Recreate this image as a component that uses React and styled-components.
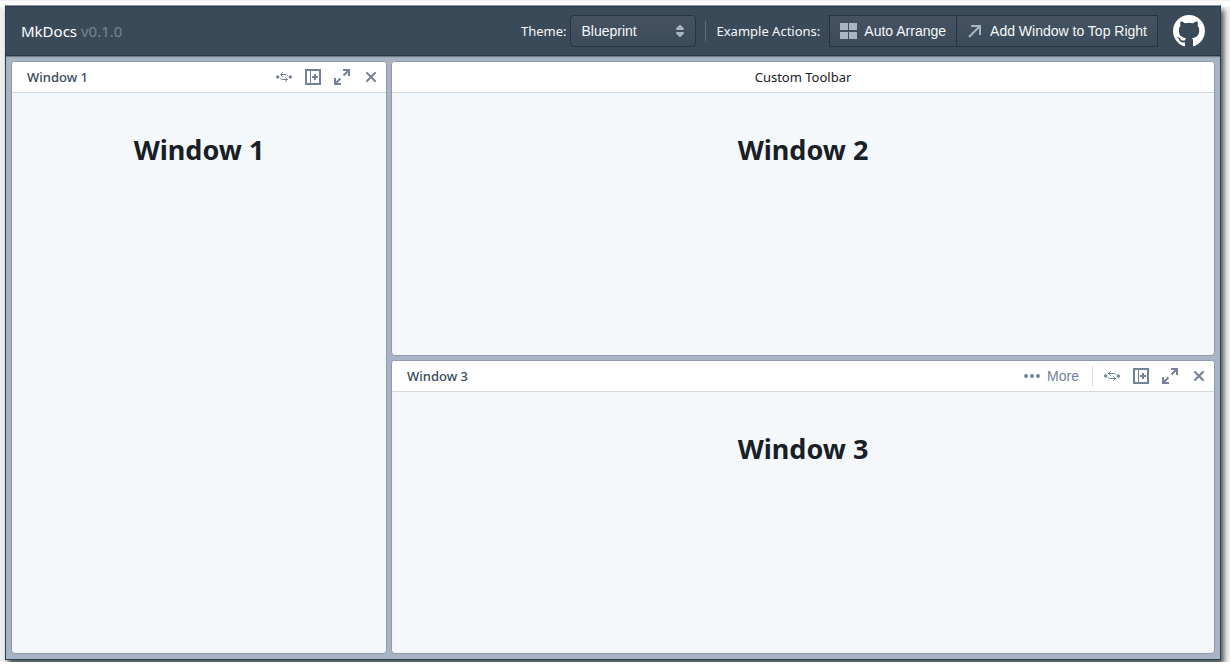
import React from "react";
import styled, { createGlobalStyle } from "styled-components";

const ui = '"Noto Sans", "Open Sans", sans-serif';
const control = '"Liberation Sans", Arial, sans-serif';

const GlobalStyle = createGlobalStyle`
  *, *::before, *::after { box-sizing: border-box; }
  body { margin: 0; background: #fff; font-family: ${ui}; font-size: 13px; color: #182026; }
`;

const Page = styled.div`
  display: flex;
  height: calc(100vh - 7px);
  min-height: 400px;
  padding: 4px 9px 2px 5px;
  overflow: hidden;
  border-top: 1px solid #f0f0f0;
  background: linear-gradient(#fff 6px, #f0f0f0 6px);
`;

const Frame = styled.div`
  flex: 1;
  min-width: 0;
  display: flex;
  flex-direction: column;
  border: 1px solid #1f444b;
  border-top-color: #8d979c;
  box-shadow: 3px 5px 5px #555;
`;

const Navbar = styled.header`
  flex: none;
  height: 50px;
  display: flex;
  align-items: center;
  justify-content: space-between;
  padding: 0 15px;
  background: #3b4a59;
  border-top: 1px solid #2c3b47;
  border-bottom: 1px solid #2b3a46;
  box-shadow: 0 1px 1px rgba(16, 22, 26, 0.35);
  z-index: 1;
  color: #f5f8fa;
`;

const Brand = styled.div`
  font-size: 15px;
  line-height: 20px;
  color: #fff;
`;

const Version = styled.span`
  color: #738694;
`;

const Actions = styled.div`
  display: flex;
  align-items: center;
`;

const Label = styled.label`
  font-size: 13px;
  line-height: 20px;
  margin-right: 4px;
`;

const GroupLabel = styled.span`
  font-size: 13px;
  line-height: 20px;
  margin-right: 9px;
`;

const SelectWrap = styled.div`
  display: grid;
  align-items: center;
  width: 126px;

  & > * { grid-area: 1 / 1; }
  & > svg { justify-self: end; margin-right: 8px; pointer-events: none; }
`;

const face = `
  height: 32px;
  border: 1px solid #28343f;
  background: linear-gradient(#455361, #3c4b5a);
  color: #f5f8fa;
  font: 14px ${control};
`;

const Select = styled.select`
  ${face}
  width: 100%;
  border-radius: 4px;
  padding: 0 30px 0 10px;
  appearance: none;
`;

const NavDivider = styled.div`
  width: 1px;
  height: 20px;
  margin: 0 10px 0 9px;
  background: #5f6e7b;
`;

const ButtonGroup = styled.div`
  display: flex;
`;

const Button = styled.button`
  ${face}
  display: flex;
  align-items: center;
  gap: 7px;
  padding: 0 10px;
  white-space: nowrap;

  & + & { margin-left: -1px; }
`;

const GithubLink = styled.a`
  display: flex;
  margin-left: 15px;
  color: #fff;
`;

const Mosaic = styled.main`
  flex: 1;
  min-height: 0;
  display: flex;
  gap: 4px;
  padding: 5px;
  background: #a8b4c3;
`;

const Column = styled.div`
  flex: ${(p) => p.$share} 1 0;
  min-width: 0;
  display: flex;
  flex-direction: column;
  gap: 4px;
`;

const Window = styled.section`
  flex: 1 1 0;
  min-height: 0;
  display: flex;
  flex-direction: column;
  overflow: hidden;
  border: 1px solid #8e9aaa;
  border-radius: 4px;
  background: #f4f8fb;
`;

const Toolbar = styled.div`
  flex: none;
  height: 31px;
  display: flex;
  align-items: center;
  justify-content: ${(p) => (p.$centered ? "center" : "space-between")};
  padding: ${(p) => (p.$centered ? "0" : "0 7px 0 15px")};
  background: #fff;
  border-bottom: 1px solid #d3d8dc;
  line-height: 20px;
`;

const Title = styled.div`
  font-weight: 500;
  color: #394b59;
`;

const Controls = styled.div`
  display: flex;
  align-items: center;
  gap: 13px;
`;

const IconButton = styled.button`
  display: flex;
  align-items: center;
  gap: 7px;
  padding: 0;
  border: 0;
  background: none;
  color: #738299;
  font: 14px ${control};
`;

const Divider = styled.div`
  width: 1px;
  height: 20px;
  margin-right: -2px;
  background: #d3d8dc;
`;

const Heading = styled.h1`
  margin: 38px 0 0;
  text-align: center;
  font-size: 27px;
  line-height: 38px;
  font-weight: 700;
`;

function Icon({ children, size = 16 }) {
  return (
    <svg width={size} height={size} viewBox="0 0 16 16" fill="currentColor" aria-hidden="true">
      {children}
    </svg>
  );
}

const ReplaceIcon = () => (
  <Icon>
    <circle cx="1.7" cy="8" r="1.7" />
    <circle cx="14.3" cy="8" r="1.7" />
    <path
      d="M6.5 3.500L4.500 5.500l2 2M5 5.500h5.500l1 1M9.500 8.500l2 2-2 2M11 10.500H5.500l-1-1"
      fill="none"
      stroke="currentColor"
      strokeWidth="1"
      strokeLinecap="round"
      strokeLinejoin="round"
    />
  </Icon>
);

const SplitIcon = () => (
  <Icon>
    <path fillRule="evenodd" d="M0 0h16v16H0zM2 2v12h3V2zM6 2v12h8V2z" />
    <path d="M9 5h2v2h2v2h-2v2H9V9H7V7h2z" />
  </Icon>
);

const ExpandIcon = () => (
  <Icon>
    <path d="M9 0h7v7h-2V3.4L10.2 7.2 8.8 5.8 12.6 2H9zM0 9h2v3.6l3.8-3.8 1.4 1.4L3.4 14H7v2H0z" />
  </Icon>
);

const CloseIcon = () => (
  <Icon>
    <path d="M9.41 8l3.29-3.29c.19-.18.3-.43.3-.71a1.003 1.003 0 00-1.71-.71L8 6.59l-3.29-3.3a1.003 1.003 0 00-1.42 1.42L6.59 8 3.3 11.29c-.19.18-.3.43-.3.71a1.003 1.003 0 001.71.71L8 9.41l3.29 3.29c.18.19.43.3.71.3a1.003 1.003 0 00.71-1.71L9.41 8z" />
  </Icon>
);

function WindowControls() {
  return (
    <>
      <IconButton aria-label="Replace Window"><ReplaceIcon /></IconButton>
      <IconButton aria-label="Split Window"><SplitIcon /></IconButton>
      <IconButton aria-label="Expand"><ExpandIcon /></IconButton>
      <IconButton aria-label="Close Window"><CloseIcon /></IconButton>
    </>
  );
}

export default function App() {
  return (
    <Page>
      <GlobalStyle />
      <Frame>
        <Navbar>
          <Brand>MkDocs <Version>v0.1.0</Version></Brand>
          <Actions>
            <Label htmlFor="theme">Theme:</Label>
            <SelectWrap>
              <Select id="theme" defaultValue="Blueprint">
                <option>Blueprint</option>
                <option>Blueprint Dark</option>
                <option>None</option>
              </Select>
              <svg width="16" height="16" viewBox="0 0 16 16" fill="#a7b6c2" aria-hidden="true">
                <path d="M5 7h6a1.003 1.003 0 00.71-1.71l-3-3C8.53 2.11 8.28 2 8 2s-.53.11-.71.29l-3 3A1.003 1.003 0 005 7zm6 2H5a1.003 1.003 0 00-.71 1.71l3 3c.18.18.43.29.71.29s.53-.11.71-.29l3-3A1.003 1.003 0 0011 9z" />
              </svg>
            </SelectWrap>
            <NavDivider />
            <GroupLabel id="actions">Example Actions:</GroupLabel>
            <ButtonGroup role="group" aria-labelledby="actions">
              <Button>
                <svg width="17" height="16" viewBox="0 0 17 16" fill="#a7b6c2" aria-hidden="true">
                  <path d="M0 0h8v7H0zM9 0h8v7H9zM0 9h8v7H0zM9 9h8v7H9z" />
                </svg>
                Auto Arrange
              </Button>
              <Button>
                <svg width="16" height="16" viewBox="0 0 16 16" fill="none" stroke="#a7b6c2" strokeWidth="2" aria-hidden="true">
                  <path d="M4 3h9v9M13 3L2 14" />
                </svg>
                Add Window to Top Right
              </Button>
            </ButtonGroup>
            <GithubLink href="#github" aria-label="GitHub">
              <Icon size={32}>
                <path d="M8 0C3.58 0 0 3.58 0 8c0 3.54 2.29 6.53 5.47 7.59.4.07.55-.17.55-.38 0-.19-.01-.82-.01-1.49-2.01.37-2.53-.49-2.69-.94-.09-.23-.48-.94-.82-1.13-.28-.15-.68-.52-.01-.53.63-.01 1.08.58 1.23.82.72 1.21 1.87.87 2.33.66.07-.52.28-.87.51-1.07-1.78-.2-3.64-.89-3.64-3.95 0-.87.31-1.59.82-2.15-.08-.2-.36-1.02.08-2.12 0 0 .67-.21 2.2.82.64-.18 1.32-.27 2-.27s1.36.09 2 .27c1.53-1.04 2.2-.82 2.2-.82.44 1.1.16 1.92.08 2.12.51.56.82 1.27.82 2.15 0 3.07-1.87 3.75-3.65 3.95.29.25.54.73.54 1.48 0 1.07-.01 1.93-.01 2.2 0 .21.15.46.55.38A8.01 8.01 0 0016 8c0-4.42-3.58-8-8-8" />
              </Icon>
            </GithubLink>
          </Actions>
        </Navbar>
        <Mosaic>
          <Column $share={376}>
            <Window>
              <Toolbar>
                <Title>Window 1</Title>
                <Controls><WindowControls /></Controls>
              </Toolbar>
              <Heading>Window 1</Heading>
            </Window>
          </Column>
          <Column $share={824}>
            <Window>
              <Toolbar $centered>Custom Toolbar</Toolbar>
              <Heading>Window 2</Heading>
            </Window>
            <Window>
              <Toolbar>
                <Title>Window 3</Title>
                <Controls>
                  <IconButton>
                    <Icon>
                      <circle cx="2" cy="8" r="2" />
                      <circle cx="8" cy="8" r="2" />
                      <circle cx="14" cy="8" r="2" />
                    </Icon>
                    More
                  </IconButton>
                  <Divider />
                  <WindowControls />
                </Controls>
              </Toolbar>
              <Heading>Window 3</Heading>
            </Window>
          </Column>
        </Mosaic>
      </Frame>
    </Page>
  );
}
